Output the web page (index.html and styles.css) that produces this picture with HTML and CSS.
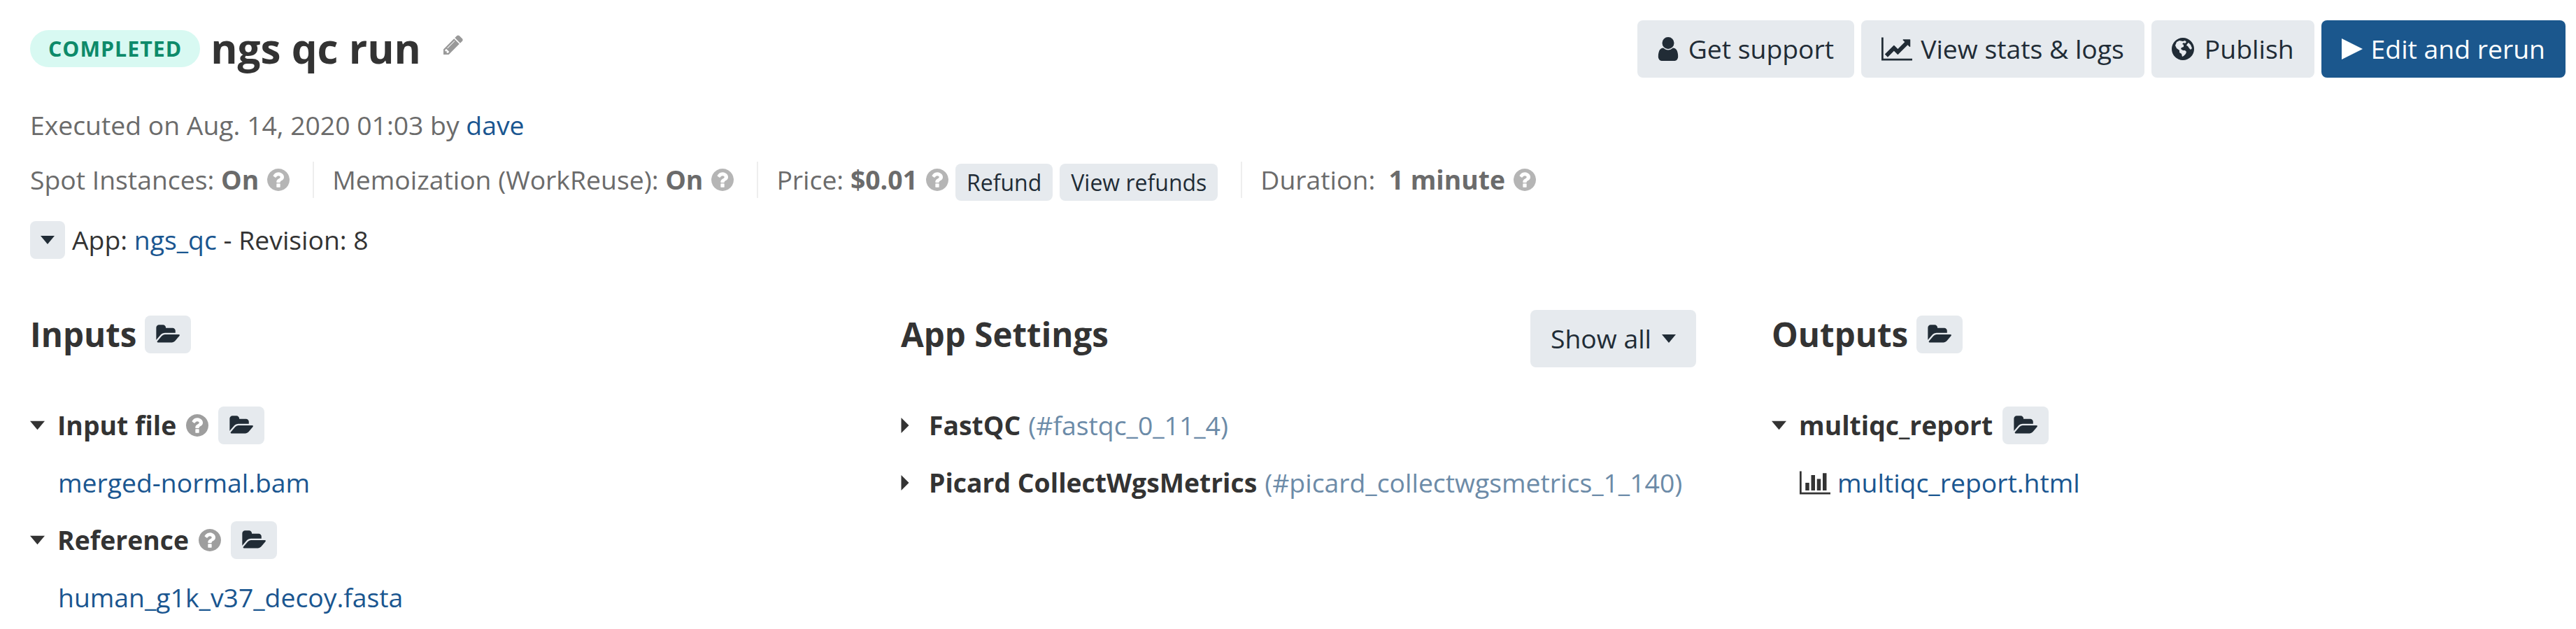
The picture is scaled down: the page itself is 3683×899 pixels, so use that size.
FILE: index.html
```html
<!DOCTYPE html>
<html lang="en">
<head>
  <meta charset="UTF-8" />
  <title>ngs qc run</title>
  <link rel="stylesheet" href="styles.css">
</head>
<body>
  <svg class="sprite" xmlns="http://www.w3.org/2000/svg">
    <symbol id="i-folder" viewBox="0 0 1920 1792"><path d="M1879 952q0 31-31 66l-336 396q-43 51-120.500 86.500t-143.500 35.500h-1088q-34 0-60.500-13t-26.500-43q0-31 31-66l336-396q43-51 120.500-86.500t143.500-35.500h1088q34 0 60.500 13t26.500 43zm-343-344v160h-832q-94 0-197 47.500t-164 119.500l-337 396-5 6q0-4-.5-12.500t-.5-12.500v-960q0-92 66-158t158-66h320q92 0 158 66t66 158v32h544q92 0 158 66t66 158z"/></symbol>
    <symbol id="i-help" viewBox="0 0 1536 1536"><path transform="translate(-128 -128)" d="M1024 1376v-192q0-14-9-23t-23-9h-192q-14 0-23 9t-9 23v192q0 14 9 23t23 9h192q14 0 23-9t9-23zm256-672q0-88-55.500-163t-138.500-116-170-41q-243 0-371 213-15 24 8 42l132 100q7 6 19 6 16 0 25-12 53-68 86-92 34-24 86-24 48 0 85.500 26t37.500 59q0 38-20 61t-68 45q-63 28-115.500 86.500t-52.500 125.500v36q0 14 9 23t23 9h192q14 0 23-9t9-23q0-19 21.500-49.500t54.500-49.500q32-18 49-28.500t46-35 44.500-48 28-60.500 12.500-81zm384 192q0 209-103 385.500t-279.500 279.500-385.500 103-385.500-103-279.500-279.500-103-385.500 103-385.500 279.500-279.500 385.500-103 385.500 103 279.500 279.500 103 385.500z"/></symbol>
    <symbol id="i-user" viewBox="256 128 1280 1536"><path d="M1536 1399q0 109-62.500 187t-150.500 78h-854q-88 0-150.500-78t-62.500-187q0-85 8.500-160.500t31.500-152 58.500-131 94-89 134.500-34.500q131 128 313 128t313-128q76 0 134.500 34.500t94 89 58.500 131 31.500 152 8.500 160.500zm-256-887q0 159-112.500 271.500t-271.500 112.500-271.500-112.500-112.500-271.500 112.500-271.500 271.500-112.500 271.500 112.500 112.500 271.500z"/></symbol>
    <symbol id="i-line" viewBox="0 128 2048 1536"><path d="M2048 1536v128h-2048v-1536h128v1408h1920zm-128-1248v435q0 21-19.500 29.500t-35.500-7.500l-121-121-633 633q-10 10-23 10t-23-10l-233-233-416 416-192-192 585-585q10-10 23-10t23 10l233 233 464-464-121-121q-16-16-7.500-35.500t29.500-19.500h435q14 0 23 9t9 23z"/></symbol>
    <symbol id="i-bars" viewBox="0 128 2048 1536"><path d="M640 896v512h-256v-512h256zm384-512v1024h-256v-1024h256zm1024 1152v128h-2048v-1536h128v1408h1920zm-640-896v768h-256v-768h256zm384-384v1152h-256v-1152h256z"/></symbol>
    <symbol id="i-pencil" viewBox="128 128 1536 1536"><path d="M491 1536l91-91-235-235-91 91v107h128v128h107zm523-928q0-22-22-22-10 0-17 7l-542 542q-7 7-7 17 0 22 22 22 10 0 17-7l542-542q7-7 7-17zm-54-192l416 416-832 832h-416v-416zm683 96q0 53-37 90l-166 166-416-416 166-165q36-38 90-38 53 0 91 38l235 234q37 39 37 91z"/></symbol>
    <symbol id="i-globe" viewBox="0 0 32 32"><path fill-rule="evenodd" d="M16 0a16 16 0 1 0 0 32 16 16 0 0 0 0-32zM7 6l4-2 5 1 3-1 2 2-2 2-2-1-2 2 2 1v3l-3 1-1 2 3 2 3 0 2 2-1 3-3 3-2 1-1-4-3-2v-3l-4-3-2-4zM24 7l3 3 2 5-2 2-2-2-2-3-2-1 1-2z"/></symbol>
    <symbol id="i-play" viewBox="0 0 10 10"><path d="M0 0L10 5L0 10z"/></symbol>
    <symbol id="i-caret" viewBox="0 0 10 6"><path d="M0 0H10L5 6z"/></symbol>
    <symbol id="i-caret-r" viewBox="0 0 6 12"><path d="M0 0L6 6L0 12z"/></symbol>
  </svg>

  <div class="page">
    <header class="top">
      <div class="title-wrap">
        <span class="badge">COMPLETED</span>
        <h1>ngs qc run</h1>
        <svg class="pencil"><use href="#i-pencil"/></svg>
      </div>
      <div class="actions">
        <a class="btn"><svg class="ic ic-user"><use href="#i-user"/></svg>Get support</a>
        <a class="btn"><svg class="ic ic-line"><use href="#i-line"/></svg>View stats &amp; logs</a>
        <a class="btn"><svg class="ic ic-globe"><use href="#i-globe"/></svg>Publish</a>
        <a class="btn btn-primary"><svg class="ic ic-play"><use href="#i-play"/></svg>Edit and rerun</a>
      </div>
    </header>

    <div class="executed">Executed on Aug. 14, 2020 01:03 by <a>dave</a></div>

    <div class="meta">
      <div class="meta-item">Spot Instances:&nbsp;<b>On</b><svg class="help"><use href="#i-help"/></svg></div>
      <div class="meta-item">Memoization (WorkReuse):&nbsp;<b>On</b><svg class="help"><use href="#i-help"/></svg></div>
      <div class="meta-item">Price:&nbsp;<b>$0.01</b><svg class="help"><use href="#i-help"/></svg><a class="btn-sm">Refund</a><a class="btn-sm">View refunds</a></div>
      <div class="meta-item">Duration:&nbsp;&nbsp;<b>1 minute</b><svg class="help"><use href="#i-help"/></svg></div>
    </div>

    <div class="app-row">
      <a class="btn-toggle"><svg class="caret"><use href="#i-caret"/></svg></a>
      <span>App: <a>ngs_qc</a> - Revision: 8</span>
    </div>

    <div class="cols">
      <section>
        <div class="col-head">
          <h2>Inputs</h2>
          <a class="btn-folder"><svg class="folder"><use href="#i-folder"/></svg></a>
        </div>
        <div class="param">
          <svg class="caret"><use href="#i-caret"/></svg><b>Input file</b><svg class="help dark"><use href="#i-help"/></svg>
          <a class="btn-folder"><svg class="folder"><use href="#i-folder"/></svg></a>
        </div>
        <div class="value"><a>merged-normal.bam</a></div>
        <div class="param">
          <svg class="caret"><use href="#i-caret"/></svg><b>Reference</b><svg class="help dark"><use href="#i-help"/></svg>
          <a class="btn-folder"><svg class="folder"><use href="#i-folder"/></svg></a>
        </div>
        <div class="value"><a>human_g1k_v37_decoy.fasta</a></div>
      </section>

      <section>
        <div class="col-head settings-head">
          <h2>App Settings</h2>
          <a class="btn btn-show">Show all<svg class="caret"><use href="#i-caret"/></svg></a>
        </div>
        <div class="param">
          <svg class="caret-r"><use href="#i-caret-r"/></svg><b>FastQC</b><a class="hash">(#fastqc_0_11_4)</a>
        </div>
        <div class="param">
          <svg class="caret-r"><use href="#i-caret-r"/></svg><b>Picard CollectWgsMetrics</b><a class="hash">(#picard_collectwgsmetrics_1_140)</a>
        </div>
      </section>

      <section>
        <div class="col-head">
          <h2>Outputs</h2>
          <a class="btn-folder"><svg class="folder"><use href="#i-folder"/></svg></a>
        </div>
        <div class="param">
          <svg class="caret"><use href="#i-caret"/></svg><b>multiqc_report</b>
          <a class="btn-folder"><svg class="folder"><use href="#i-folder"/></svg></a>
        </div>
        <div class="value"><svg class="bars"><use href="#i-bars"/></svg><a>multiqc_report.html</a></div>
      </section>
    </div>
  </div>
</body>
</html>
```

FILE: styles.css
```css
html, body {
  margin: 0;
  background: #fff;
}
body {
  font-family: "Open Sans", sans-serif;
  font-size: 37.33px;
  line-height: 54px;
  color: #333;
  overflow: hidden;
}
a {
  color: #1a5690;
  text-decoration: none;
}
b { font-weight: 700; }
svg { fill: currentColor; flex: none; }
.sprite { display: none; }

.page { padding: 29px 15px 0 43px; }

/* header */
.top {
  display: flex;
  justify-content: space-between;
  align-items: flex-start;
}
.title-wrap {
  display: flex;
  align-items: center;
  height: 82px;
  margin-top: -1px;
}
.badge {
  background: #d8f9f2;
  color: #0d8a6a;
  font-size: 30.33px;
  font-weight: 700;
  letter-spacing: 1px;
  line-height: 53px;
  height: 53px;
  padding: 0 26px;
  border-radius: 27px;
  margin-right: 15px;
}
h1 {
  margin: 0;
  font-size: 58.33px;
  font-weight: 700;
  line-height: 82px;
}
.pencil {
  width: 28px;
  height: 28px;
  color: #999;
  margin-left: 32px;
  margin-bottom: 10px;
}
.actions { display: flex; gap: 10px; }
.btn {
  display: flex;
  align-items: center;
  height: 82px;
  padding: 0 29px;
  background: #e6eaee;
  color: #212c36;
  border-radius: 8px;
}
.btn-primary {
  background: #1b578d;
  color: #fff;
}
.ic { margin-right: 14px; height: 34px; }
.ic-user { width: 30px; }
.ic-line { width: 44px; margin-right: 12px; }
.ic-globe { width: 32px; height: 32px; margin-right: 15px; }
.ic-play { width: 30px; height: 34px; margin-right: 12px; }

/* meta rows */
.executed {
  color: #6b6b6b;
  margin-top: 41px;
}
.executed a { color: #1a5690; }
.meta {
  display: flex;
  align-items: center;
  color: #6b6b6b;
  margin-top: 25px;
}
.meta-item {
  display: flex;
  align-items: center;
  height: 52px;
  padding-right: 33px;
  margin-right: 26px;
  border-right: 2px solid #eee;
}
.meta-item:last-child { border-right: 0; }
.help {
  width: 32px;
  height: 32px;
  margin-left: 12px;
  color: #b5b5b5;
}
.help.dark { color: #9e9e9e; margin-left: 14px; }
.btn-sm {
  background: #e6eaee;
  color: #212c36;
  border-radius: 8px;
  font-size: 32px;
  line-height: 53px;
  height: 53px;
  padding: 0 16px;
  margin-left: 10px;
  position: relative;
  top: 3px;
}
.app-row {
  display: flex;
  align-items: center;
  gap: 10px;
  margin-top: 33px;
}
.btn-toggle {
  display: flex;
  align-items: center;
  justify-content: center;
  width: 50px;
  height: 54px;
  background: #e6eaee;
  color: #212c36;
  border-radius: 8px;
}
.caret { width: 20px; height: 12px; }

/* columns */
.cols {
  display: grid;
  grid-template-columns: 1137px 1137px 1137px;
  column-gap: 108px;
  margin-top: 67px;
}
.col-head {
  display: flex;
  align-items: center;
  gap: 12px;
  height: 82px;
  margin-bottom: 62px;
}
.settings-head { justify-content: space-between; }
h2 {
  margin: 0;
  font-size: 47.5px;
  font-weight: 700;
  line-height: 64px;
}
.btn-folder {
  display: flex;
  align-items: center;
  justify-content: center;
  width: 66px;
  height: 54px;
  background: #e6eaee;
  color: #212c36;
  border-radius: 8px;
}
.folder { width: 35px; height: 32px; }
.param {
  display: flex;
  align-items: center;
  height: 54px;
  margin-bottom: 28px;
}
.param .caret {
  width: 21px;
  height: 14px;
  margin-right: 18px;
}
.caret-r {
  width: 12px;
  height: 22px;
  margin-right: 28px;
}
.param .btn-folder { margin-left: 14px; }
.hash { color: #6c8ba8; margin-left: 11px; }
.value {
  display: flex;
  align-items: center;
  height: 54px;
  margin-bottom: 28px;
  padding-left: 40px;
}
.bars {
  width: 44px;
  height: 36px;
  margin-right: 10px;
}
.btn-show {
  margin-top: 12px;
}
.btn-show .caret { margin-left: 15px; }
```
